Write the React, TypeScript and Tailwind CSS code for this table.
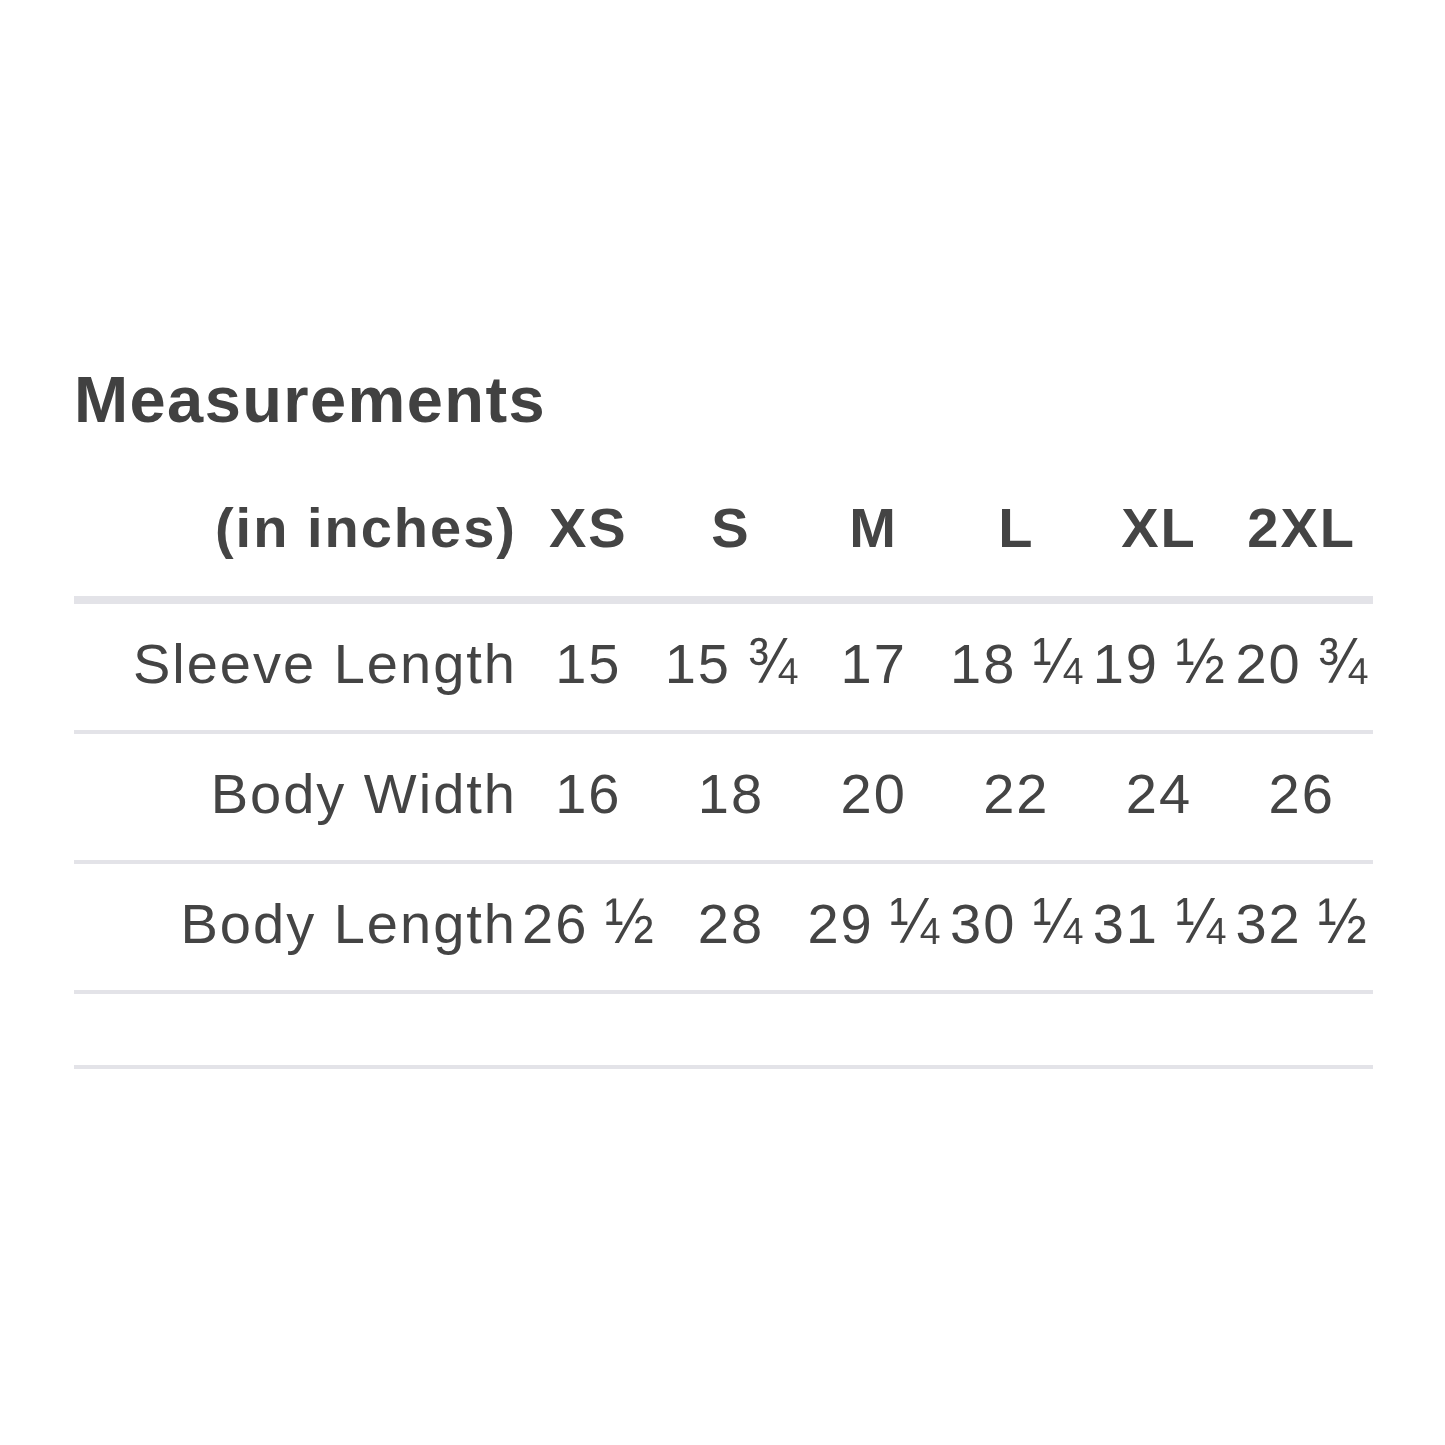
const SIZES = ["XS", "S", "M", "L", "XL", "2XL"];

const ROWS = [
  { label: "Sleeve Length", values: ["15", "15 ¾", "17", "18 ¼", "19 ½", "20 ¾"] },
  { label: "Body Width", values: ["16", "18", "20", "22", "24", "26"] },
  { label: "Body Length", values: ["26 ½", "28", "29 ¼", "30 ¼", "31 ¼", "32 ½"] },
];

// the font's ¼ ½ ¾ come out a bit small, so they get a slight lift around the baseline
function Value({ text }: { text: string }) {
  const [whole, fraction] = text.split(" ");
  if (!fraction) return <span>{whole}</span>;
  return (
    <span>
      {whole}{" "}
      <span className="inline-block origin-[50%_47px] scale-x-[1.05] scale-y-[1.15]">{fraction}</span>
    </span>
  );
}

export default function App() {
  return (
    <div
      className="min-h-[1445px] bg-white pt-[367px] pl-[74px] text-[#444444]"
      style={{ fontFamily: '"Liberation Sans", Arial, sans-serif' }}
    >
      <h1 className="mb-[68px] text-[65px] leading-[65px] font-bold tracking-[1.4px] text-[#414141]">
        Measurements
      </h1>

      <div className="w-[1299px]">
        <div className="grid grid-cols-[443px_repeat(6,1fr)] border-b-[8px] border-[#e3e3e8] pb-[40px] text-[56px] leading-[56px] font-bold tracking-[2px]">
          <div className="flex justify-end whitespace-nowrap">(in inches)</div>
          {SIZES.map((size) => (
            <div key={size} className="flex justify-center whitespace-nowrap">
              {size}
            </div>
          ))}
        </div>

        {ROWS.map((row) => (
          <div
            key={row.label}
            className="grid grid-cols-[443px_repeat(6,1fr)] border-b-[4px] border-[#e3e3e8] pt-[32px] pb-[38px] text-[56px] leading-[56px] tracking-[2px]"
          >
            <div className="flex justify-end whitespace-nowrap">{row.label}</div>
            {row.values.map((value, index) => (
              <div key={index} className="flex justify-center whitespace-nowrap">
                <Value text={value} />
              </div>
            ))}
          </div>
        ))}

        <div className="h-[75px] border-b-[4px] border-[#e3e3e8]" />
      </div>
    </div>
  );
}
